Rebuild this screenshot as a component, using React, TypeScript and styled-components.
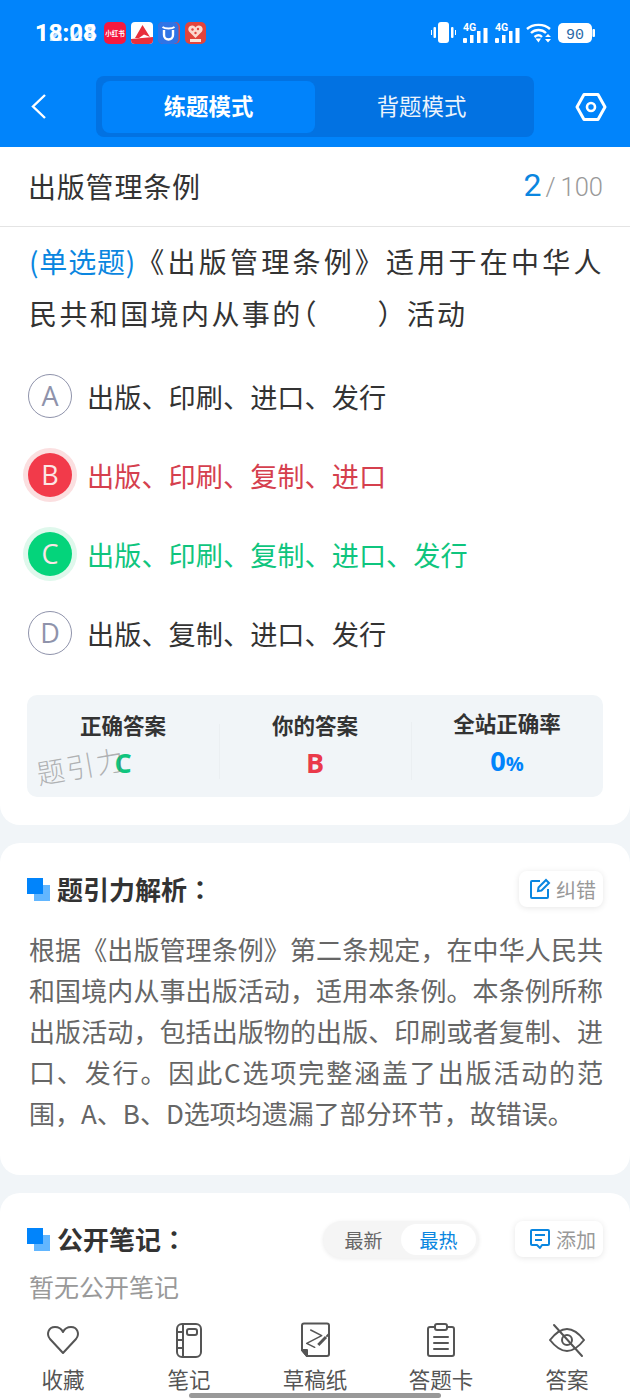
import React from "react";
import styled, { createGlobalStyle } from "styled-components";

const Global = createGlobalStyle`
  html, body { margin: 0; padding: 0; background: #f1f5f8; }
  * { box-sizing: border-box; }
`;
const FONT = `"Noto Sans CJK SC", "Noto Sans", sans-serif`;

const Page = styled.div`
  width: 630px; height: 1400px; overflow: hidden; display: flex; flex-direction: column;
  font-family: ${FONT}; background: #f1f5f8; position: relative;
`;
const Header = styled.header`
  height: 147px; background: #0184fb; flex: none; display: flex; flex-direction: column;
`;
const StatusBar = styled.div`
  height: 76px; padding: 19px 35px 0 35px; display: flex; align-items: flex-start; justify-content: space-between;
`;
const StatusLeft = styled.div`display: flex; align-items: center; height: 28px; gap: 5px;`;
const TimeStack = styled.div`
  position: relative; width: 64px; height: 28px; color: #fff;
  font: 700 24px/28px "Roboto", sans-serif;
`;
const TimeLayer = styled.span<{ $faded?: boolean }>`
  position: absolute; left: 0; top: 0; opacity: ${p => (p.$faded ? 0.75 : 1)};
`;
const AppTile = styled.svg`width: 22px; height: 22px; flex: none; display: block;`;
const StatusRight = styled.div`display: flex; align-items: center; gap: 6px; height: 28px;`;
const SignalIcon = styled.svg`width: 26px; height: 26px; margin-top: -6px; flex: none; display: block;`;
const NavRow = styled.div`
  height: 61px; display: flex; align-items: center; padding: 0 23px 0 29px;
`;
const BackBtn = styled.svg`width: 20px; height: 30px; display: block; flex: none;`;
const Tabs = styled.div`
  width: 438px; height: 61px; background: #0272e2; border-radius: 8px; padding: 5px 6px 4px; display: flex; flex: none;
  margin: 0 41px 0 47px;
`;
const Tab = styled.div<{ $active?: boolean }>`
  flex: 1; border-radius: 8px; display: flex; align-items: center; justify-content: center; padding-bottom: 4px;
  color: #fff; font-size: 22.4px; font-weight: ${p => (p.$active ? 700 : 400)};
  background: ${p => (p.$active ? "#0183fb" : "transparent")};
  opacity: ${p => (p.$active ? 1 : 0.92)};
`;
const GearIcon = styled.svg`width: 32px; height: 30px; flex: none; display: block;`;

const Content = styled.main`flex: 1; min-height: 0; overflow: hidden; display: flex; flex-direction: column; gap: 18px;`;
const QuestionCard = styled.section`
  background: #fff; border-radius: 0 0 20px 20px; height: 678px; flex: none;
`;
const TitleBar = styled.div`
  height: 80px; border-bottom: 1px solid #e4e4e4; padding: 0 27px 2px 28px; display: flex; align-items: center; justify-content: space-between;
`;
const BookTitle = styled.div`font-size: 28px; color: #333; letter-spacing: 0.8px; line-height: 40px;`;
const Progress = styled.div`display: flex; align-items: baseline; color: #999; font: 300 25.5px/40px "Roboto", sans-serif;`;
const ProgressNow = styled.span`color: #0a86e0; font-size: 32px; font-weight: 400;`;
const ProgressSlash = styled.span`margin: 0 5px 0 4px;`;
const QuestionText = styled.div`
  padding: 8px 26px 0 29px; font-size: 28px; line-height: 52px; color: #333; letter-spacing: 2.4px; height: 125px;
`;
const QuestionLine = styled.div<{ $fit?: boolean }>`
  white-space: nowrap;
  ${p => (p.$fit ? "white-space: normal; text-align: justify; text-align-last: justify;" : "")}
`;
const TypeTag = styled.span`color: #0a86e0; letter-spacing: 0;`;
const OpenParen = styled.span`font-feature-settings: "halt";`;
const Blank = styled.span`letter-spacing: 1.2px;`;
const Options = styled.div`display: flex; flex-direction: column; padding: 4px 0 0 28px;`;
const OptionRow = styled.div<{ $tone: string }>`
  height: 79px; display: flex; align-items: center; gap: 15px; font-size: 27.2px; color: ${p => p.$tone};
`;
const Letter = styled.div<{ $fill?: string; $halo?: string }>`
  width: 44px; height: 44px; border-radius: 50%; flex: none; display: flex; align-items: center; justify-content: center;
  font: 400 27px/1 "Open Sans", sans-serif;
  color: ${p => (p.$fill ? "#fbe6e6" : "#8f93ab")};
  background: ${p => p.$fill ?? "#fff"};
  border: ${p => (p.$fill ? "none" : "1px solid #8f93ab")};
  box-shadow: ${p => (p.$halo ? `0 0 0 5px ${p.$halo}` : "none")};
`;
const Stats = styled.div`
  position: relative; margin: 23px 27px 0 27px; height: 102px; background: #f1f5f8; border-radius: 10px; display: flex; align-items: center;
`;
const Stat = styled.div`
  flex: 1; display: flex; flex-direction: column; align-items: center;
  & + & { position: relative; }
  & + &::before { content: ""; position: absolute; left: 0; top: 14px; bottom: 4px; width: 1px; background: #ebeff2; }
`;
const StatLabel = styled.div`font-size: 21.5px; font-weight: 700; color: #333; line-height: 32px; margin-top: -1px;`;
const StatValue = styled.div<{ $tone: string }>`
  font: 700 27px/40px "Open Sans", sans-serif; color: ${p => p.$tone}; display: flex; align-items: baseline; margin-top: 2px;
`;
const Percent = styled.span`font-size: 20px;`;
const Watermark = styled.div`
  position: absolute; left: 9px; top: 54px; font-size: 28px; line-height: 32px; letter-spacing: 2px; color: rgba(110,110,110,.5);
  transform: rotate(-10deg); font-weight: 300; white-space: nowrap;
`;
const Card = styled.section<{ $h: number }>`
  background: #fff; border-radius: 20px; padding: 28px 27px 0 27px; height: ${p => p.$h}px; flex: none;
`;
const CardHead = styled.div`display: flex; align-items: center; justify-content: space-between; height: 36px;`;
const HeadLeft = styled.div`display: flex; align-items: center; gap: 7px;`;
const HeadMark = styled.svg`width: 23px; height: 24px; flex: none; display: block;`;
const HeadTitle = styled.h2`margin: -1px 0 0; font-size: 26px; font-weight: 700; color: #333; line-height: 36px;`;
const Colon = styled.span`font-family: "Noto Sans CJK TC", sans-serif;`;
const HeadRight = styled.div`display: flex; align-items: center; gap: 36px;`;
const PillBtn = styled.div<{ $w: number }>`
  height: 36px; width: ${p => p.$w}px; border-radius: 8px; background: #fff; box-shadow: 0 1px 6px rgba(0,0,0,.1);
  display: flex; align-items: center; justify-content: flex-end; gap: 5px; color: #999; font-size: 20px; padding-right: 7px;
`;
const PillIcon = styled.svg`width: 22px; height: 22px; flex: none; display: block;`;
const Body = styled.p`
  margin: 21px 0 0 2px; font-size: 26px; line-height: 41px; color: #666; text-align: justify;
`;
const Segment = styled.div`
  width: 156px; height: 37px; border-radius: 19px; background: #f5f5f5; box-shadow: 0 1px 4px rgba(0,0,0,.08); display: flex; padding: 3px;
`;
const SegItem = styled.div<{ $active?: boolean }>`
  flex: 1; border-radius: 16px; display: flex; align-items: center; justify-content: center; font-size: 19px;
  color: ${p => (p.$active ? "#0a86e0" : "#666")}; background: ${p => (p.$active ? "#fff" : "transparent")};
`;
const EmptyNote = styled.div`margin: 11px 0 0 2px; font-size: 25px; line-height: 36px; color: #999;`;

const BottomBar = styled.nav`
  position: absolute; left: 0; right: 0; bottom: 0; height: 90px; background: #fff; display: grid; grid-template-columns: repeat(5, 126px);
`;
const BarItem = styled.div`display: flex; flex-direction: column; align-items: center; padding-top: 12px;`;
const BarIcon = styled.svg`width: 36px; height: 36px; display: block; flex: none;`;
const BarLabel = styled.div`font-size: 21.5px; line-height: 30px; margin-top: 6px; color: #555;`;
const HomeIndicator = styled.div`
  position: absolute; left: 189px; bottom: 2px; width: 252px; height: 5px; border-radius: 3px; background: #999;
`;

const ico = { fill: "none", stroke: "#555", strokeWidth: 2, strokeLinecap: "round" as const, strokeLinejoin: "round" as const };

const opts = [
  { k: "A", t: "出版、印刷、进口、发行", tone: "#333" },
  { k: "B", t: "出版、印刷、复制、进口", tone: "#d5404e", fill: "#f23a4a", halo: "#fbdfe0" },
  { k: "C", t: "出版、印刷、复制、进口、发行", tone: "#0fc57e", fill: "#04d47b", halo: "#dff8ec" },
  { k: "D", t: "出版、复制、进口、发行", tone: "#333" },
];

const Mark = () => (
  <HeadMark viewBox="0 0 23 24">
    <rect x="7" y="8" width="16" height="16" fill="#62b6ff" />
    <rect x="0" y="1" width="16" height="16" fill="#0184fb" />
  </HeadMark>
);

const Signal = () => (
  <SignalIcon viewBox="0 -6 26 26">
    <text x="1" y="7.5" fontSize="10.5" fontWeight="700" fill="#fff" fontFamily="Roboto, sans-serif">4G</text>
    <rect x="1" y="15" width="4" height="5" rx="1" fill="#fff" /><rect x="8" y="12" width="3.5" height="8" fill="#fff" />
    <rect x="15" y="8" width="3.5" height="12" fill="#fff" /><rect x="21.5" y="5" width="4" height="15" fill="#fff" />
  </SignalIcon>
);

export default function App() {
  return (
    <Page>
      <Global />
      <Header>
        <StatusBar>
          <StatusLeft>
            <TimeStack>
              <TimeLayer>18:08</TimeLayer>
              <TimeLayer $faded>12:24</TimeLayer>
            </TimeStack>
            <AppTile viewBox="0 0 22 22">
              <rect width="22" height="22" rx="5" fill="#f5193f" />
              <text x="11" y="14" textAnchor="middle" fontSize="6.5" fontWeight="700" fill="#fff" fontFamily={FONT}>小红书</text>
            </AppTile>
            <AppTile viewBox="0 0 22 22">
              <rect width="22" height="22" rx="4" fill="#fff" />
              <path d="M11.5 3 L19 15 L13 12.5 L8 16 L4 16Z" fill="#e8303c" />
              <path d="M0 17 L22 15 V18 a4 4 0 0 1 -4 4 H4 a4 4 0 0 1 -4 -4Z" fill="#e8303c" />
            </AppTile>
            <AppTile viewBox="0 0 22 22">
              <rect width="22" height="22" rx="5" fill="#d8474e" />
              <rect width="20.5" height="22" rx="5" fill="#2f74e6" />
              <path d="M6 8 V13 C6 19 15 19 15 13 V8" fill="none" stroke="#fff" strokeWidth="2.4" />
              <path d="M4.5 5 C7 7 14 7 16.5 5" fill="none" stroke="#fff" strokeWidth="1.8" />
            </AppTile>
            <AppTile viewBox="0 0 22 22">
              <rect width="21" height="22" rx="5" fill="#e2443c" />
              <path d="M10.5 16 L4 9.5 C2 6 5 3 7.5 3.5 C9 3.8 10 4.5 10.5 5.5 C11 4.5 12 3.8 13.5 3.5 C16 3 19 6 17 9.5Z" fill="#fbd9cf" />
              <circle cx="7.5" cy="7.5" r="1.2" fill="#e2443c" /><circle cx="13" cy="7" r="1.2" fill="#e2443c" /><circle cx="10.5" cy="11" r="1.2" fill="#e2443c" />
              <rect x="5" y="17" width="11" height="3" fill="#fbe5da" />
            </AppTile>
          </StatusLeft>
          <StatusRight>
            <svg width="25" height="22" viewBox="0 0 25 22">
              <rect x="7" y="0" width="11" height="21" rx="3" fill="#fff" />
              <rect x="2.5" y="5" width="2.5" height="11" rx="1" fill="#fff" /><rect x="20" y="5" width="2.5" height="11" rx="1" fill="#fff" />
              <rect x="0" y="8" width="1" height="5" fill="#fff" /><rect x="24" y="8" width="1" height="5" fill="#fff" />
            </svg>
            <Signal />
            <Signal />
            <svg width="26" height="20" viewBox="0 0 26 20" fill="none" stroke="#fff" strokeWidth="2.4">
              <path d="M1 6 C7 0.5 18 0.5 24 6" /><path d="M5 10 C9 6 16 6 20 10" /><path d="M8.5 14 C11 12 14 12 16 14" />
              <path d="M9.5 15.5 L15 15.5 L12.5 19.5Z" fill="#fff" stroke="none" />
              <path d="M19 14 L25 14 L22 11Z M19 16 L25 16 L22 19.5Z" fill="#fff" stroke="none" />
            </svg>
            <svg width="37" height="20" viewBox="0 0 37 20">
              <rect x="0" y="0" width="34" height="20" rx="5" fill="#fff" />
              <rect x="34.5" y="6" width="2.5" height="8" rx="1" fill="#fff" />
              <text x="17" y="15.5" textAnchor="middle" fontSize="15" fill="#2a6aa8" fontFamily="Liberation Mono, monospace">90</text>
            </svg>
          </StatusRight>
        </StatusBar>
        <NavRow>
          <BackBtn viewBox="0 0 20 30"><path d="M16 3 L4 14.5 L16 26" fill="none" stroke="#fff" strokeWidth="2.4" /></BackBtn>
          <Tabs>
            <Tab $active>练题模式</Tab>
            <Tab>背题模式</Tab>
          </Tabs>
          <GearIcon viewBox="0 0 32 30">
            <path d="M9 2.5 H23 L30 15 L23 27.5 H9 L2 15Z" fill="none" stroke="#fff" strokeWidth="3" strokeLinejoin="round" />
            <circle cx="16" cy="15" r="4" fill="none" stroke="#fff" strokeWidth="2.6" />
          </GearIcon>
        </NavRow>
      </Header>
      <Content>
        <QuestionCard>
          <TitleBar>
            <BookTitle>出版管理条例</BookTitle>
            <Progress><ProgressNow>2</ProgressNow><ProgressSlash>/</ProgressSlash>100</Progress>
          </TitleBar>
          <QuestionText>
            <QuestionLine $fit><TypeTag>(单选题)</TypeTag>《出版管理条例》适用于在中华人</QuestionLine>
            <QuestionLine>民共和国境内从事的<OpenParen>（</OpenParen><Blank>　　）</Blank>活动</QuestionLine>
          </QuestionText>
          <Options>
            {opts.map(o => (
              <OptionRow key={o.k} $tone={o.tone}>
                <Letter $fill={o.fill} $halo={o.halo}>{o.k}</Letter>
                <span>{o.t}</span>
              </OptionRow>
            ))}
          </Options>
          <Stats>
            <Stat><StatLabel>正确答案</StatLabel><StatValue $tone="#0fc57e">C</StatValue></Stat>
            <Stat><StatLabel>你的答案</StatLabel><StatValue $tone="#ea3a4a">B</StatValue></Stat>
            <Stat><StatLabel>全站正确率</StatLabel><StatValue $tone="#0184fb">0<Percent>%</Percent></StatValue></Stat>
            <Watermark>题引力</Watermark>
          </Stats>
        </QuestionCard>
        <Card $h={332}>
          <CardHead>
            <HeadLeft><Mark /><HeadTitle>题引力解析<Colon>：</Colon></HeadTitle></HeadLeft>
            <PillBtn $w={84}>
              <PillIcon viewBox="0 0 22 22">
                <path d="M11 3 H3 a1 1 0 0 0 -1 1 V19 a1 1 0 0 0 1 1 H18 a1 1 0 0 0 1 -1 V11" fill="none" stroke="#0a86e0" strokeWidth="2" />
                <path d="M9 13 L9.5 9.5 L17 2 L20 5 L12.5 12.5Z" fill="none" stroke="#0a86e0" strokeWidth="2" />
              </PillIcon>
              纠错
            </PillBtn>
          </CardHead>
          <Body>根据《出版管理条例》第二条规定，在中华人民共和国境内从事出版活动，适用本条例。本条例所称出版活动，包括出版物的出版、印刷或者复制、进口、发行。因此C选项完整涵盖了出版活动的范围，A、B、D选项均遗漏了部分环节，故错误。</Body>
        </Card>
        <Card $h={200}>
          <CardHead>
            <HeadLeft><Mark /><HeadTitle>公开笔记<Colon>：</Colon></HeadTitle></HeadLeft>
            <HeadRight>
              <Segment><SegItem>最新</SegItem><SegItem $active>最热</SegItem></Segment>
              <PillBtn $w={88}>
                <PillIcon viewBox="0 0 22 22">
                  <path d="M3 2 H19 a1 1 0 0 1 1 1 V16 a1 1 0 0 1 -1 1 H13 L11 20 L8 17 H3 a1 1 0 0 1 -1 -1 V3 a1 1 0 0 1 1 -1Z" fill="none" stroke="#0a86e0" strokeWidth="2" strokeLinejoin="round" />
                  <path d="M6 7 H16 M6 12 H13" stroke="#0a86e0" strokeWidth="2" />
                </PillIcon>
                添加
              </PillBtn>
            </HeadRight>
          </CardHead>
          <EmptyNote>暂无公开笔记</EmptyNote>
        </Card>
      </Content>
      <BottomBar>
        <BarItem>
          <BarIcon viewBox="0 0 36 36" {...ico}><path d="M18 31 L5 17 C1 12 3.5 5 10 5 C14 5 16.5 7 18 10 C19.5 7 22 5 26 5 C32.5 5 35 12 31 17Z" /></BarIcon>
          <BarLabel>收藏</BarLabel>
        </BarItem>
        <BarItem>
          <BarIcon viewBox="0 0 36 36" {...ico}>
            <rect x="6" y="2" width="24" height="33" rx="5" />
            <path d="M12 2 V35 M6 10 H12 M6 18 H12 M6 26 H12" />
            <rect x="16" y="7" width="10" height="6" rx="2" />
          </BarIcon>
          <BarLabel>笔记</BarLabel>
        </BarItem>
        <BarItem>
          <BarIcon viewBox="0 0 36 36" {...ico}>
            <path d="M10 34 L5 28 V3.5 a2 2 0 0 1 2 -2 H30 a2 2 0 0 1 2 2 V32 a2 2 0 0 1 -2 2 Z" />
            <path d="M5 28 H10 V34Z" fill="#555" />
            <path d="M13.7 8 L24.7 13.7 L9.7 21.3 L17.7 25.3" strokeWidth="1.5" />
            <path d="M21.3 23 L29 15" strokeWidth="3" strokeLinecap="butt" />
            <path d="M30 14 L31.5 12.5" strokeWidth="2" />
          </BarIcon>
          <BarLabel>草稿纸</BarLabel>
        </BarItem>
        <BarItem>
          <BarIcon viewBox="0 0 36 36" {...ico}>
            <path d="M11 5 H7 a2 2 0 0 0 -2 2 V32 a2 2 0 0 0 2 2 H29 a2 2 0 0 0 2 -2 V7 a2 2 0 0 0 -2 -2 H25" />
            <rect x="12" y="2" width="12" height="6" rx="2" />
            <path d="M11 15 H25 M11 21 H25 M11 27 H25" />
          </BarIcon>
          <BarLabel>答题卡</BarLabel>
        </BarItem>
        <BarItem>
          <BarIcon viewBox="0 0 36 36" {...ico}>
            <path d="M1 18 C8 9 14 7 18 7 C22 7 28 9 35 18 C28 27 22 29 18 29 C14 29 8 27 1 18Z" />
            <circle cx="18" cy="18" r="5" />
            <path d="M5 3 L33 34" />
          </BarIcon>
          <BarLabel>答案</BarLabel>
        </BarItem>
      </BottomBar>
      <HomeIndicator />
    </Page>
  );
}
